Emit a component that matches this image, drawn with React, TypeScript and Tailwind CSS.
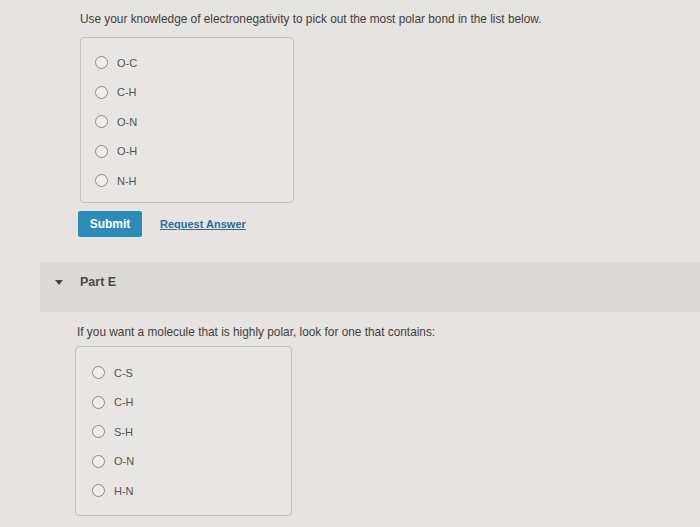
function Radio({ label }: { label: string }) {
  return (
    <div className="flex items-center h-[29.5px]">
      <span className="w-[13px] h-[13px] rounded-full border-[1.5px] border-[#8a8886] bg-[#efedea]" />
      <span className="ml-[9px] text-[11px] text-[#555350]">{label}</span>
    </div>
  );
}

export default function App() {
  const first = ["O-C", "C-H", "O-N", "O-H", "N-H"];
  const second = ["C-S", "C-H", "S-H", "O-N", "H-N"];
  return (
    <div
      className="w-[700px] h-[527px] overflow-hidden bg-[#e6e4e1] text-[#3d3b39]"
      style={{ fontFamily: '"Liberation Sans", Arial, sans-serif' }}
    >
      <div className="pl-[80px] pt-[12px]">
        <p className="text-[11.85px] leading-[14px] text-[#3f3d3b]">
          Use your knowledge of electronegativity to pick out the most polar bond in the list below.
        </p>
        <div className="mt-[11px] w-[214px] h-[166px] rounded-[4px] border border-[#c3c1be] bg-[#e8e6e3] pl-[14px] pt-[10px]">
          {first.map((l) => (
            <Radio key={l} label={l} />
          ))}
        </div>
        <div className="mt-[8px] -ml-[2px] flex items-center">
          <button className="w-[64px] h-[26px] rounded-[2px] bg-[#2c8bb9] text-white text-[12px] font-bold">
            Submit
          </button>
          <span className="ml-[18px] text-[11px] font-bold text-[#2f6b9a] underline">Request Answer</span>
        </div>
      </div>

      <div className="mt-[25px] ml-[40px] h-[50px] bg-[#dcdad7] flex items-start pt-[13px]">
        <span className="mt-[5px] ml-[15px] w-0 h-0 border-l-[4px] border-r-[4px] border-t-[5px] border-l-transparent border-r-transparent border-t-[#4a4846]" />
        <span className="ml-[17px] text-[12.5px] leading-[14px] font-bold text-[#4a4846]">Part E</span>
      </div>

      <div className="pl-[77px] pt-[13px]">
        <p className="text-[11.85px] leading-[14px] text-[#3f3d3b]">
          If you want a molecule that is highly polar, look for one that contains:
        </p>
        <div className="mt-[7px] -ml-[2px] w-[217px] h-[170px] rounded-[4px] border border-[#c3c1be] bg-[#e8e6e3] pl-[16px] pt-[11px]">
          {second.map((l) => (
            <Radio key={l} label={l} />
          ))}
        </div>
      </div>
    </div>
  );
}
